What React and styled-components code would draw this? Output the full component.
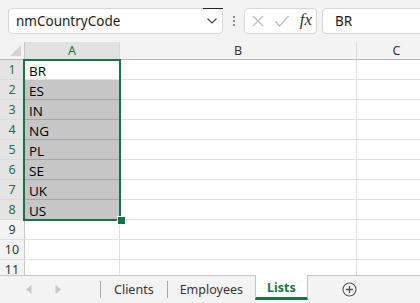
import styled, { createGlobalStyle } from "styled-components";

const GREEN = "#1e7145";

const Global = createGlobalStyle`
  html, body { margin: 0; padding: 0; }
  body {
    width: 420px;
    height: 303px;
    overflow: hidden;
    background: #f3f3f3;
    font-family: "Noto Sans", "Open Sans", sans-serif;
  }
`;

const Window = styled.div`
  width: 420px;
  height: 303px;
  display: flex;
  flex-direction: column;
  overflow: hidden;
`;

const Toolbar = styled.div`
  height: 42px;
  box-sizing: border-box;
  padding: 8px 0 0 8px;
  display: flex;
  align-items: flex-start;
  overflow: hidden;
`;

const Field = styled.div`
  box-sizing: border-box;
  height: 26px;
  background: #fff;
  border: 1px solid #d6d6d6;
  border-radius: 4px;
  display: flex;
  align-items: center;
  flex-shrink: 0;
  position: relative;
`;

const NameBox = styled(Field)`
  width: 215px;
  padding-left: 7px;
  font-size: 13.5px;
  color: #1a1a1a;
  justify-content: space-between;
`;

const DropTop = styled.span`
  position: absolute;
  right: -1px;
  top: -1px;
  width: 20px;
  height: 1px;
  background: #222;
`;

const Chevron = styled.svg`
  margin-right: 4px;
`;

const Dots = styled.div`
  width: 21px;
  height: 26px;
  flex-shrink: 0;
  display: flex;
  flex-direction: column;
  align-items: center;
  justify-content: center;
  gap: 2px;
  span {
    width: 2px;
    height: 2px;
    background: #8a8a8a;
  }
`;

const Buttons = styled(Field)`
  width: 73px;
  padding: 0 4px 0 6px;
  justify-content: space-between;
`;

const Fx = styled.span`
  font-family: "Liberation Serif", "DejaVu Serif", serif;
  font-style: italic;
  font-size: 17px;
  color: #333;
  margin-top: -3px;
`;

const Formula = styled(Field)`
  width: 140px;
  margin-left: 5px;
  padding-left: 12px;
  font-size: 13.5px;
  color: #1a1a1a;
`;

const Sheet = styled.div`
  flex: 1;
  position: relative;
  background: #fff;
  overflow: hidden;
`;

const Grid = styled.div`
  display: grid;
  grid-template-columns: 25px 95px 237px 80px;
  grid-template-rows: 18px repeat(11, 20px);
`;

const Corner = styled.div`
  background: #f3f3f3;
  border-right: 1px solid #c8c8c8;
  border-bottom: 1px solid #b8b8b8;
  box-sizing: border-box;
  display: flex;
  align-items: flex-end;
  justify-content: flex-end;
  padding: 0 3px 3px 0;
`;

const ColHead = styled.div`
  box-sizing: border-box;
  background: ${p => (p.$sel ? "#e1e1e1" : "#f3f3f3")};
  color: ${p => (p.$sel ? GREEN : "#333")};
  border-right: 1px solid #d8d8d8;
  border-bottom: 1px solid ${p => (p.$sel ? GREEN : "#b8b8b8")};
  font-size: 12.5px;
  display: flex;
  align-items: center;
  justify-content: center;
`;

const RowHead = styled.div`
  box-sizing: border-box;
  background: ${p => (p.$sel ? "#e4e4e4" : "#f3f3f3")};
  color: ${p => (p.$sel ? GREEN : "#333")};
  border-right: 1px solid ${p => (p.$sel ? GREEN : "#c8c8c8")};
  border-bottom: 1px solid #dcdcdc;
  font-size: 12.5px;
  display: flex;
  align-items: center;
  justify-content: center;
`;

const Cell = styled.div`
  box-sizing: border-box;
  background: ${p => (p.$fill ? "#c6c6c6" : "#fff")};
  border-right: 1px solid #e1e1e1;
  border-bottom: 1px solid ${p => (p.$fill ? "#a8a8a8" : "#e1e1e1")};
  font-family: "Open Sans", "Noto Sans", sans-serif;
  font-size: 13.5px;
  color: #000;
  padding: 2px 0 0 4px;
  line-height: 18px;
`;

const Selection = styled.div`
  position: absolute;
  left: 23px;
  top: 17px;
  width: 98px;
  height: 162px;
  box-sizing: border-box;
  border: 2px solid ${GREEN};
  pointer-events: none;
`;

const Handle = styled.div`
  position: absolute;
  left: 117px;
  top: 174px;
  width: 7px;
  height: 7px;
  background: ${GREEN};
  border: 1px solid #fff;
  box-sizing: content-box;
`;

const TabBar = styled.div`
  height: 28px;
  flex-shrink: 0;
  box-sizing: border-box;
  border-top: 1px solid #c6c6c6;
  background: #f3f3f3;
  display: flex;
  align-items: stretch;
`;

const Nav = styled.div`
  width: 100px;
  display: flex;
  align-items: center;
  padding-left: 26px;
  box-sizing: border-box;
  gap: 23px;
`;

const Sep = styled.div`
  width: 1px;
  background: #a8a8a8;
  margin: 5px 0 5px;
`;

const Tab = styled.div`
  padding: 0 ${p => p.$pad || 14}px;
  display: flex;
  align-items: center;
  font-size: 12.5px;
  color: #333;
  box-sizing: border-box;
  margin-top: -1px;
  ${p =>
    p.$active &&
    `
    background: #fff;
    color: ${GREEN};
    font-weight: 700;
    border-left: 1px solid #c6c6c6;
    border-right: 1px solid #c6c6c6;
    border-bottom: 3px solid ${GREEN};
    margin-bottom: 3px;
    padding-top: 2px;
  `}
`;

const Add = styled.div`
  margin-left: 34px;
  display: flex;
  align-items: center;
`;

const codes = ["BR", "ES", "IN", "NG", "PL", "SE", "UK", "US"];

export default function App() {
  const rows = Array.from({ length: 11 }, (_, i) => i + 1);
  return (
    <Window>
      <Global />
      <Toolbar>
        <NameBox>
          nmCountryCode
          <DropTop />
          <Chevron width="12" height="8" viewBox="0 0 12 8">
            <path d="M1.5 1.5 L6 6 L10.5 1.5" fill="none" stroke="#444" strokeWidth="1.2" />
          </Chevron>
        </NameBox>
        <Dots>
          <span />
          <span />
          <span />
        </Dots>
        <Buttons>
          <svg width="14" height="14" viewBox="0 0 14 14">
            <path d="M2 2 L12 12 M12 2 L2 12" stroke="#bdbdbd" strokeWidth="1.2" />
          </svg>
          <svg width="16" height="14" viewBox="0 0 16 14">
            <path d="M1.5 7.5 L5.5 12 L14.5 2" fill="none" stroke="#bdbdbd" strokeWidth="1.2" />
          </svg>
          <Fx>fx</Fx>
        </Buttons>
        <Formula>BR</Formula>
      </Toolbar>
      <Sheet>
        <Grid>
          <Corner>
            <svg width="11" height="11" viewBox="0 0 11 11">
              <path d="M11 0 L11 11 L0 11 Z" fill="#d4d4d4" />
            </svg>
          </Corner>
          <ColHead $sel>A</ColHead>
          <ColHead>B</ColHead>
          <ColHead>C</ColHead>
          {rows.map(r => [
            <RowHead key={"h" + r} $sel={r <= 8}>{r}</RowHead>,
            <Cell key={"a" + r} $fill={r >= 2 && r <= 8}>{codes[r - 1] || ""}</Cell>,
            <Cell key={"b" + r} />,
            <Cell key={"c" + r} />,
          ])}
        </Grid>
        <Selection />
        <Handle />
      </Sheet>
      <TabBar>
        <Nav>
          <svg width="6" height="9" viewBox="0 0 6 9">
            <path d="M5.5 0 L0 4.5 L5.5 9 Z" fill="#c8c8c8" />
          </svg>
          <svg width="6" height="9" viewBox="0 0 6 9">
            <path d="M0.5 0 L6 4.5 L0.5 9 Z" fill="#c8c8c8" />
          </svg>
        </Nav>
        <Sep />
        <Tab $pad={13}>Clients</Tab>
        <Sep />
        <Tab $pad={12}>Employees</Tab>
        <Tab $active $pad={11}>Lists</Tab>
        <Add>
          <svg width="15" height="15" viewBox="0 0 15 15">
            <circle cx="7.5" cy="7.5" r="6.5" fill="none" stroke="#555" strokeWidth="1.1" />
            <path d="M7.5 4 V11 M4 7.5 H11" stroke="#555" strokeWidth="1.3" />
          </svg>
        </Add>
      </TabBar>
    </Window>
  );
}
